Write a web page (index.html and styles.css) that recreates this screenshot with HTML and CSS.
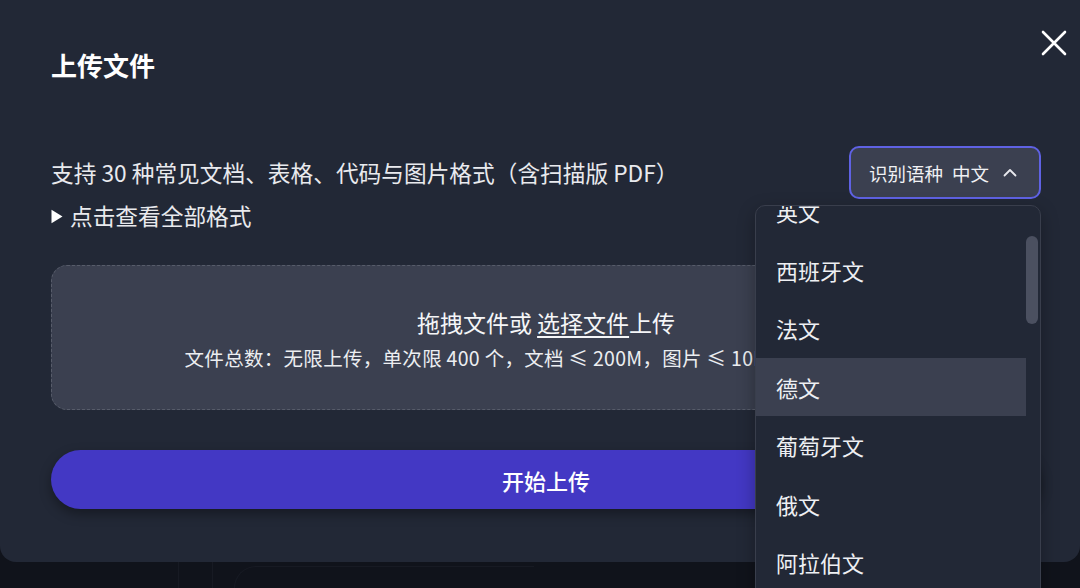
FILE: index.html
```html
<!doctype html>
<html>
<head>
<meta charset="utf-8">
<title>上传文件</title>
<link rel="stylesheet" href="styles.css">
</head>
<body>
<div class="backdrop">
	<div class="bgline bgline1"></div>
	<div class="bgline bgline2"></div>
	<div class="bgcard"></div>
</div>

<div class="modal">
	<h2 class="title">上传文件</h2>
	<button class="close" aria-label="关闭">
		<svg width="26" height="26" viewBox="0 0 26 26"><path d="M2 2L24 24M24 2L2 24" stroke="#fff" stroke-width="2.6" stroke-linecap="round"/></svg>
	</button>

	<div class="intro">
		<p class="desc">支持 30 种常见文档、表格、代码与图片格式（含扫描版 PDF）</p>
		<div class="lang">
			<span>识别语种</span><span class="cur">中文</span>
			<svg width="14" height="9" viewBox="0 0 14 9"><path d="M1.5 7.5L7 2L12.5 7.5" fill="none" stroke="#e8e9ee" stroke-width="1.8" stroke-linecap="round" stroke-linejoin="round"/></svg>
		</div>
	</div>
	<p class="more">
		<svg width="12" height="15" viewBox="0 0 12 15"><path d="M0.5 0.8L11.5 7.5L0.5 14.2Z" fill="#fff"/></svg>
		点击查看全部格式
	</p>

	<div class="drop">
		<p class="drop-main">拖拽文件或 <u>选择文件</u>上传</p>
		<p class="drop-sub">文件总数：无限上传，单次限 400 个，文档 ≤ 200M，图片 ≤ 10M，表格 ≤ 100M</p>
	</div>

	<button class="start">开始上传</button>

	<div class="menu">
		<ul class="menu-list">
			<li>英文</li>
			<li>西班牙文</li>
			<li>法文</li>
			<li class="on">德文</li>
			<li>葡萄牙文</li>
			<li>俄文</li>
			<li>阿拉伯文</li>
			<li>日文</li>
		</ul>
		<div class="thumb"></div>
	</div>
</div>
</body>
</html>
```

FILE: styles.css
```css
*{ margin:0; padding:0; box-sizing:border-box}
ul{ list-style:none}
html,body{ height:100%; overflow:hidden}
body{ background:#10131b; font-family:"Noto Sans CJK SC", "Noto Sans", sans-serif; color:#e9eaee}

.backdrop{ position:absolute; left:0; top:0; width:100%; height:100%}
.bgline{ position:absolute; top:560px; width:1px; height:40px; background:#171a23}
.bgline1{ left:178px}
.bgline2{ left:212px}
.bgcard{ position:absolute; left:234px; top:566px; width:300px; height:60px; border-top:1px solid #171a23; border-left:1px solid #171a23; border-radius:22px 0 0 0}

.modal{ position:relative; width:1080px; height:562px; background:#222836; border-radius:0 0 16px 16px; padding:47px 39px 0 51px}

.title{ font-size:26px; line-height:36px; font-weight:700; color:#fff}

.close{ position:absolute; right:13px; top:30px; width:26px; height:26px; background:none; border:0; cursor:pointer}

.intro{ display:flex; align-items:center; justify-content:space-between; margin-top:63px}
.desc{ font-size:22.7px; line-height:32px}
.lang{ display:flex; align-items:center; height:53px; padding:0 22px 0 18px; background:#3b4050; border:2px solid #5f62e4; border-radius:10px; font-size:18.5px; color:#f0f1f4}
.lang .cur{ margin-left:9px}
.lang svg{ margin-left:14px}

.more{ display:flex; align-items:center; font-size:22.7px; line-height:32px; margin-top:1px}
.more svg{ margin-right:7px}

.drop{ margin-top:33px; height:145px; background:#3b4050; border:1px dashed #575c6a; border-radius:16px; display:flex; flex-direction:column; align-items:center; padding-top:39px}
.drop-main{ font-size:23px; line-height:34px; font-weight:400; color:#f5f6f8}
.drop-main u{ text-underline-offset:4px; text-decoration-thickness:1.5px}
.drop-sub{ font-size:19.5px; letter-spacing:0.3px; line-height:32px; margin-top:3px; color:#eceef1; white-space:nowrap}

.start{ display:block; width:100%; height:59px; margin-top:40px; border:0; border-radius:30px; background:#4338c4; color:#fff; font-family:inherit; font-size:22px; font-weight:500; box-shadow:0 5px 12px rgba(0,0,0,.35)}

.menu{ position:absolute; left:755px; top:205px; width:286px; height:420px; background:#222836; border:1px solid #393e4c; border-radius:10px; overflow:hidden; box-shadow:0 6px 18px rgba(0,0,0,.3)}
.menu-list{ margin-top:-24px; margin-right:14px}
.menu-list li{ height:58.5px; line-height:58.5px; padding-left:20px; font-size:22px; color:#eef0f3}
.menu-list li.on{ background:#3b4050}
.thumb{ position:absolute; right:2px; top:30px; width:12px; height:88px; border-radius:6px; background:#4b5060}
```
